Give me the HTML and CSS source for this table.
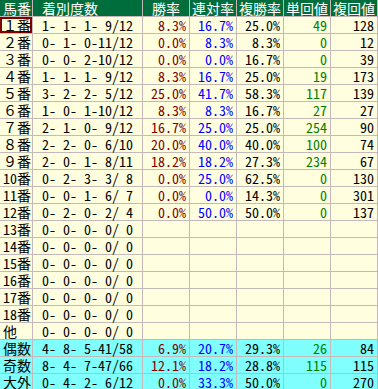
FILE: index.html
```html
<!DOCTYPE html>
<html lang="ja">
<head>
<meta charset="utf-8">
<link rel="stylesheet" href="styles.css">
</head>
<body>
<table class="stats">
<colgroup>
<col class="c-no"><col class="c-rec"><col class="c-n"><col class="c-n"><col class="c-n"><col class="c-n"><col class="c-last">
</colgroup>
<thead>
<tr><th class="h-no">馬番</th><th class="h-rec">着別度数</th><th>勝率</th><th>連対率</th><th>複勝率</th><th>単回値</th><th>複回値</th></tr>
</thead>
<tbody>
<tr><td class="no sel">１番</td><td class="rec">1- 1- 1- 9/12</td><td class="win">8.3%</td><td class="ren">16.7%</td><td class="fuku">25.0%</td><td class="tan">49</td><td class="fk">128</td></tr>
<tr><td class="no">２番</td><td class="rec">0- 1- 0-11/12</td><td class="win">0.0%</td><td class="ren">8.3%</td><td class="fuku">8.3%</td><td class="tan">0</td><td class="fk">12</td></tr>
<tr><td class="no">３番</td><td class="rec">0- 0- 2-10/12</td><td class="win">0.0%</td><td class="ren">0.0%</td><td class="fuku">16.7%</td><td class="tan">0</td><td class="fk">39</td></tr>
<tr><td class="no">４番</td><td class="rec">1- 1- 1- 9/12</td><td class="win">8.3%</td><td class="ren">16.7%</td><td class="fuku">25.0%</td><td class="tan">19</td><td class="fk">173</td></tr>
<tr><td class="no">５番</td><td class="rec">3- 2- 2- 5/12</td><td class="win">25.0%</td><td class="ren">41.7%</td><td class="fuku">58.3%</td><td class="tan">117</td><td class="fk">139</td></tr>
<tr><td class="no">６番</td><td class="rec">1- 0- 1-10/12</td><td class="win">8.3%</td><td class="ren">8.3%</td><td class="fuku">16.7%</td><td class="tan">27</td><td class="fk">27</td></tr>
<tr><td class="no">７番</td><td class="rec">2- 1- 0- 9/12</td><td class="win">16.7%</td><td class="ren">25.0%</td><td class="fuku">25.0%</td><td class="tan">254</td><td class="fk">90</td></tr>
<tr><td class="no">８番</td><td class="rec">2- 2- 0- 6/10</td><td class="win">20.0%</td><td class="ren">40.0%</td><td class="fuku">40.0%</td><td class="tan">100</td><td class="fk">74</td></tr>
<tr><td class="no">９番</td><td class="rec">2- 0- 1- 8/11</td><td class="win">18.2%</td><td class="ren">18.2%</td><td class="fuku">27.3%</td><td class="tan">234</td><td class="fk">67</td></tr>
<tr><td class="no"><span class="hw">10</span>番</td><td class="rec">0- 2- 3- 3/ 8</td><td class="win">0.0%</td><td class="ren">25.0%</td><td class="fuku">62.5%</td><td class="tan">0</td><td class="fk">130</td></tr>
<tr><td class="no"><span class="hw">11</span>番</td><td class="rec">0- 0- 1- 6/ 7</td><td class="win">0.0%</td><td class="ren">0.0%</td><td class="fuku">14.3%</td><td class="tan">0</td><td class="fk">301</td></tr>
<tr><td class="no"><span class="hw">12</span>番</td><td class="rec">0- 2- 0- 2/ 4</td><td class="win">0.0%</td><td class="ren">50.0%</td><td class="fuku">50.0%</td><td class="tan">0</td><td class="fk">137</td></tr>
<tr><td class="no"><span class="hw">13</span>番</td><td class="rec">0- 0- 0- 0/ 0</td><td></td><td></td><td></td><td></td><td></td></tr>
<tr><td class="no"><span class="hw">14</span>番</td><td class="rec">0- 0- 0- 0/ 0</td><td></td><td></td><td></td><td></td><td></td></tr>
<tr><td class="no"><span class="hw">15</span>番</td><td class="rec">0- 0- 0- 0/ 0</td><td></td><td></td><td></td><td></td><td></td></tr>
<tr><td class="no"><span class="hw">16</span>番</td><td class="rec">0- 0- 0- 0/ 0</td><td></td><td></td><td></td><td></td><td></td></tr>
<tr><td class="no"><span class="hw">17</span>番</td><td class="rec">0- 0- 0- 0/ 0</td><td></td><td></td><td></td><td></td><td></td></tr>
<tr><td class="no"><span class="hw">18</span>番</td><td class="rec">0- 0- 0- 0/ 0</td><td></td><td></td><td></td><td></td><td></td></tr>
<tr><td class="no">他</td><td class="rec">0- 0- 0- 0/ 0</td><td></td><td></td><td></td><td></td><td></td></tr>
<tr class="sum"><td class="no">偶数</td><td class="rec">4- 8- 5-41/58</td><td class="win">6.9%</td><td class="ren">20.7%</td><td class="fuku">29.3%</td><td class="tan">26</td><td class="fk">84</td></tr>
<tr class="sum"><td class="no">奇数</td><td class="rec">8- 4- 7-47/66</td><td class="win">12.1%</td><td class="ren">18.2%</td><td class="fuku">28.8%</td><td class="tan">115</td><td class="fk">115</td></tr>
<tr class="sum"><td class="no">大外</td><td class="rec">0- 4- 2- 6/12</td><td class="win">0.0%</td><td class="ren">33.3%</td><td class="fuku">50.0%</td><td class="tan">0</td><td class="fk">270</td></tr>
</tbody>
</table>
</body>
</html>
```
FILE: styles.css
```css
html, body {
  margin: 0;
  padding: 0;
  background: #ffffff;
}

.stats {
  border-collapse: separate;
  border-spacing: 0;
  table-layout: fixed;
  width: 378px;
  font-family: "Noto Sans CJK JP", sans-serif;
  font-size: 14px;
  font-feature-settings: "hwid" 1;
  line-height: 16px;
}

.c-no { width: 33px; }
.c-rec { width: 110px; }
.c-n { width: 47px; }
.c-last { width: 47px; }

.stats th,
.stats td {
  box-sizing: border-box;
  height: 17px;
  padding: 0 3px 0 3px;
  border-right: 1px solid #c4b8b8;
  border-bottom: 1px solid #c4b8b8;
  white-space: pre;
  vertical-align: middle;
}

.stats th {
  background: #006e3c;
  color: #ffffff;
  font-weight: normal;
  text-align: center;
  padding: 0;
}

.stats th.h-no { text-align: left; padding-left: 3px; }
.stats th.h-rec { text-align: left; padding-left: 9px; }

.stats td {
  background: #ffffe0;
  color: #000000;
  text-align: right;
}

.stats tr.sum td { background: #80ffff; }

.stats td.no {
  text-align: left;
  padding-left: 3px;
  font-feature-settings: normal;
}
.stats td.no .hw { font-feature-settings: "hwid" 1; }

.stats td.rec { text-align: left; padding-left: 9px; }

.stats td.win { color: #800000; }
.stats td.ren { color: #0000ff; }
.stats td.fuku { color: #000000; }
.stats td.tan { color: #008000; }
.stats td.fk { color: #000000; }

.stats td.sel {
  box-shadow: inset 0 0 0 2px #800000;
}
```
